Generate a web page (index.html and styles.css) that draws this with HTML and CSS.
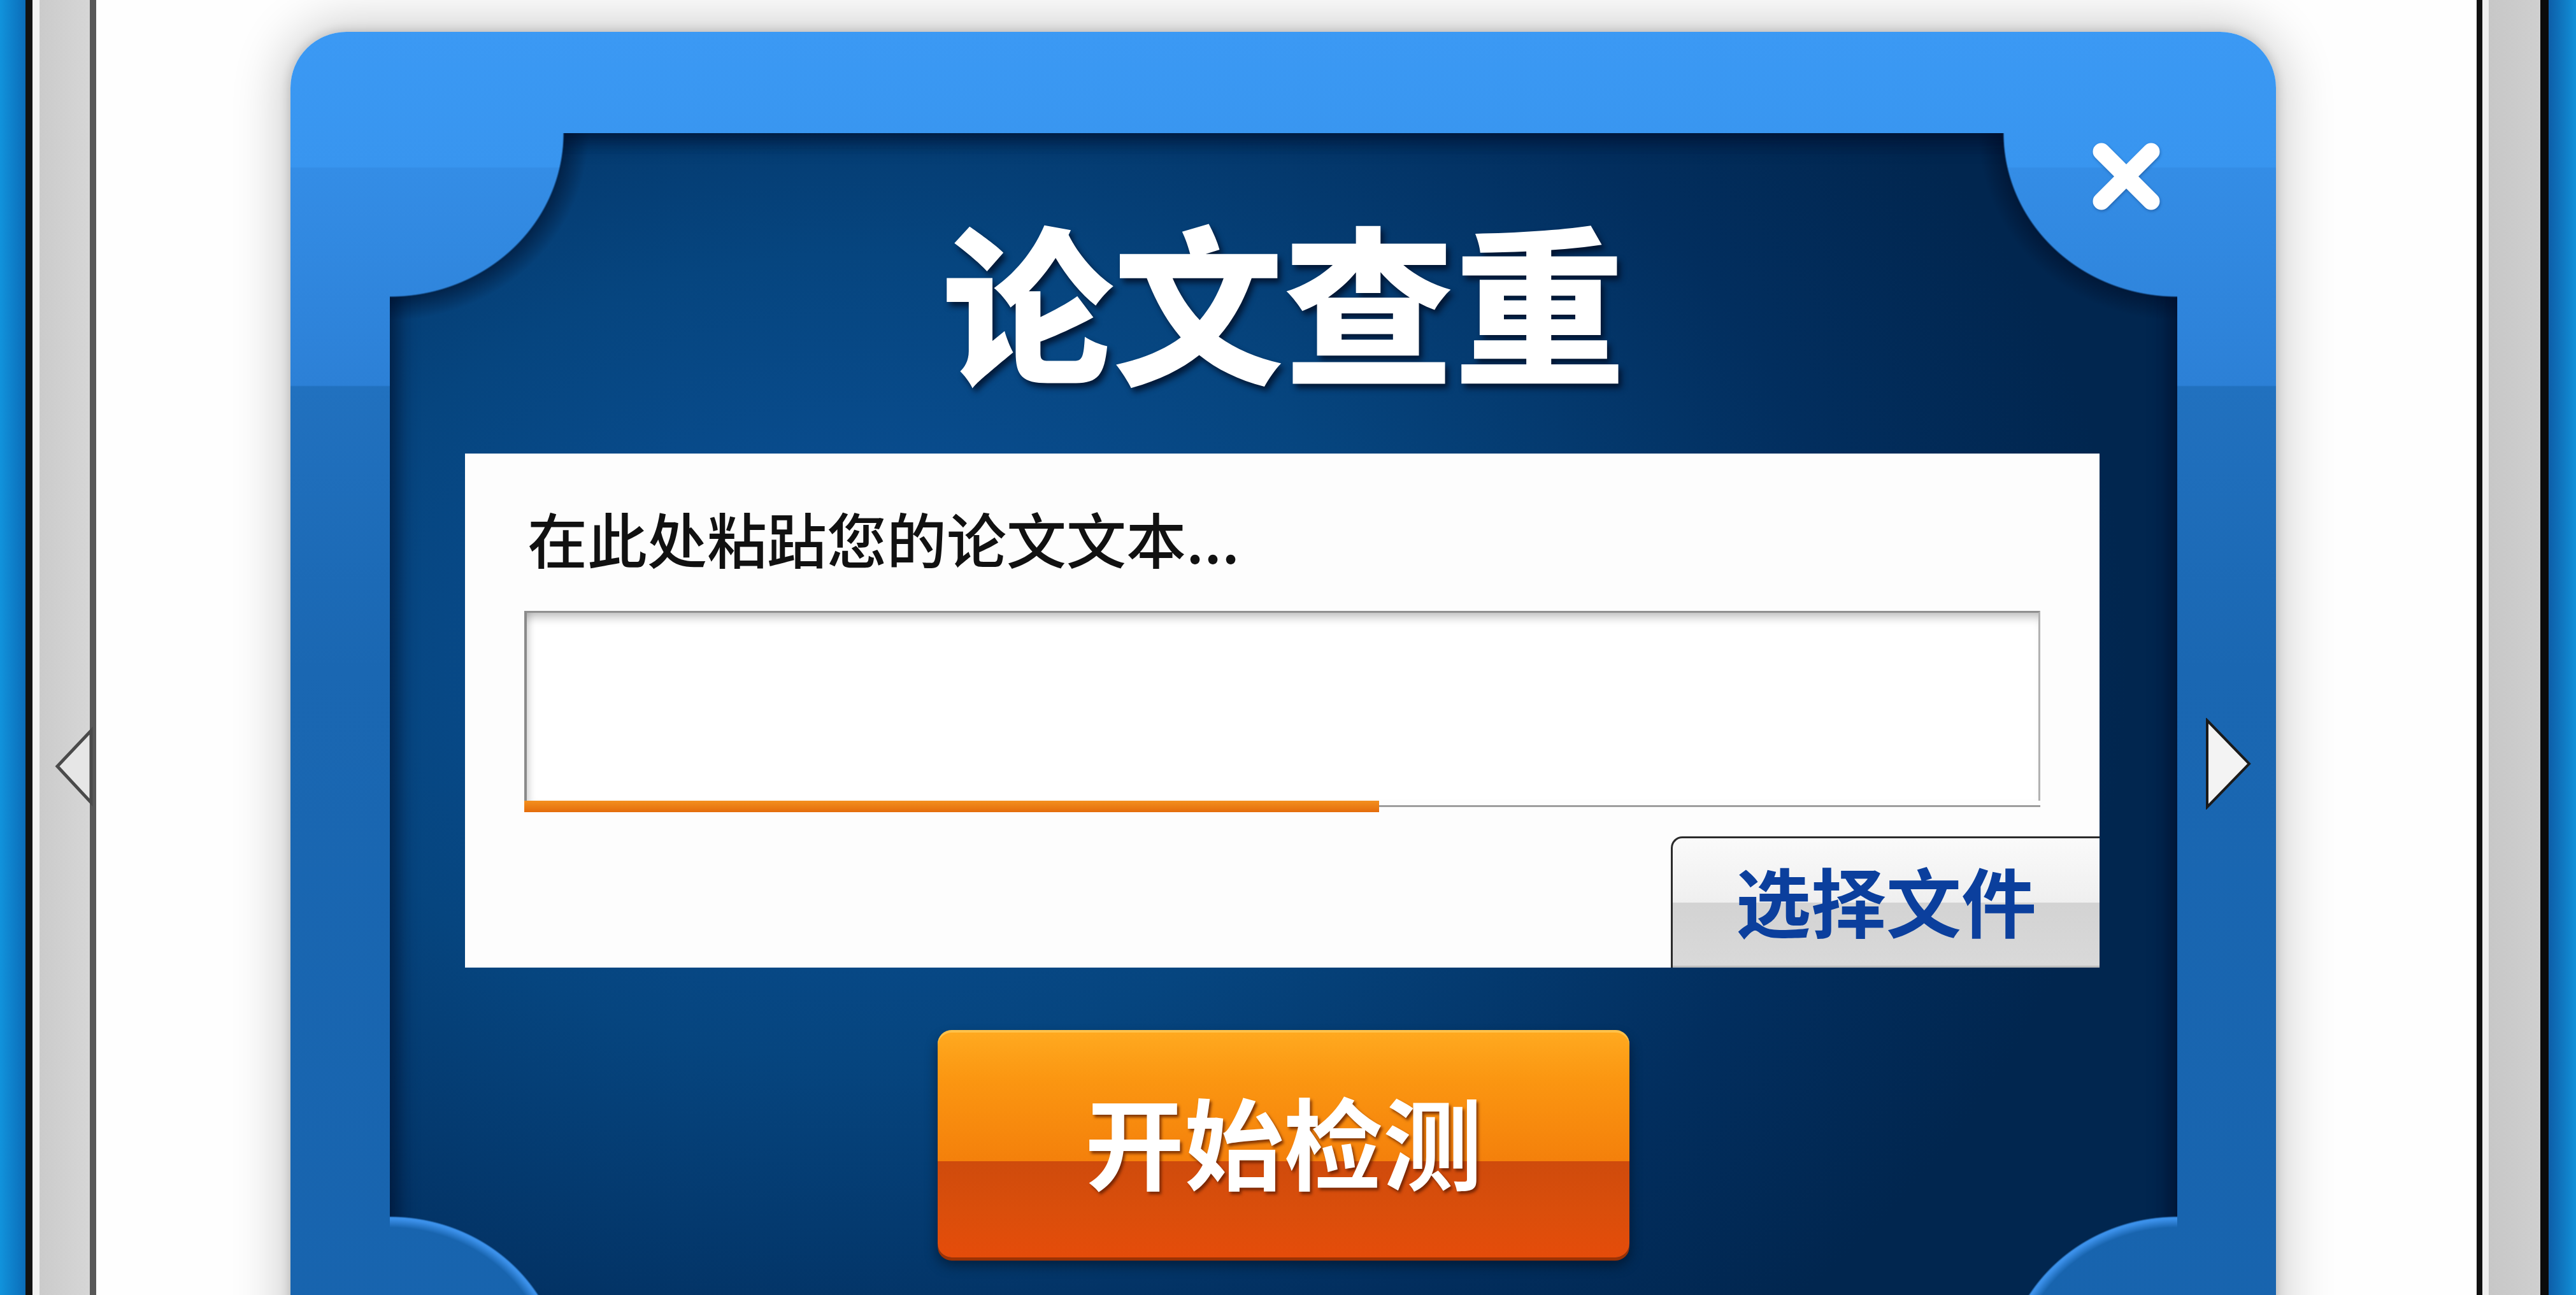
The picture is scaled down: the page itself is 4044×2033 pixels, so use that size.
FILE: index.html
```html
<!DOCTYPE html>
<html lang="zh-CN">

<head>
	<meta charset="UTF-8">
	<title>论文查重</title>
	<link rel="stylesheet" href="styles.css">
</head>

<body>
	<div class="screen">
		<div class="edge edge-left"></div>
		<div class="rail rail-left">
			<svg class="rail-arrow" width="62" height="121" viewBox="0 0 62 121">
				<polygon points="58,4 5,60 58,117" fill="#e6e6e6" stroke="#4a4a4a" stroke-width="5" stroke-linejoin="miter"/>
			</svg>
		</div>

		<main class="stage">
			<section class="dialog">
				<button class="dialog-close" title="关闭">
					<svg width="110" height="108" viewBox="0 0 110 108">
						<path d="M16 15 L94 93 M94 15 L16 93" stroke="#fff" stroke-width="27" stroke-linecap="round"/>
					</svg>
				</button>
				<svg class="dialog-next" width="74" height="144" viewBox="0 0 74 144">
					<polygon points="4,4 70,72 4,140" fill="#f3f3f3" stroke="#1a1a1a" stroke-width="4" stroke-linejoin="miter"/>
				</svg>

				<div class="panel">
					<h1 class="panel-title">论文查重</h1>

					<div class="paper-box">
						<label class="paper-label" for="paperText">在此处粘跕您的论文文本...</label>
						<div class="paper-input">
							<textarea id="paperText"></textarea>
							<div class="upload-track">
								<div class="upload-fill" style="width: 56.4%"></div>
							</div>
						</div>
						<button class="file-button">选择文件</button>
					</div>

					<button class="start-button">开始检测</button>
				</div>
			</section>
		</main>

		<div class="rail rail-right"></div>
		<div class="edge edge-right"></div>
	</div>
</body>

</html>
```

FILE: styles.css
```css
html, body {
	margin: 0;
	padding: 0;
	background: #fefefe;
	overflow: hidden;
}
body {
	font-family: "Noto Sans CJK SC", "Noto Sans", sans-serif;
}
button {
	font-family: inherit;
	cursor: pointer;
}

.screen {
	display: flex;
	flex-direction: row;
	height: 2033px;
	overflow: hidden;
}

/* window frame on both sides */
.edge {
	flex: 0 0 auto;
}
.edge-left {
	width: 40px;
	background: linear-gradient(to right, #1193dc, #0b6cb8);
}
.edge-right {
	width: 43px;
	background: linear-gradient(to right, #0d5ea8, #1290d8);
}
.rail {
	flex: 0 0 auto;
	box-sizing: border-box;
	display: flex;
	flex-direction: column;
}
.rail-left {
	width: 111px;
	border-left: 11px solid #121212;
	border-right: 10px solid #585858;
	background: linear-gradient(to right, #f1f1f1 0, #f1f1f1 11px, #cbcbcb 11px, #d6d6d6 100%);
}
.rail-right {
	width: 113px;
	border-left: 9px solid #111;
	border-right: 13px solid #0b0b0b;
	background: linear-gradient(to right, #efefef 0, #efefef 10px, #c7c7c7 10px, #cfcfcf 100%);
}
.rail-arrow {
	margin: 1143px 0 0 34px;
	overflow: visible;
}

.stage {
	flex: 1;
	min-width: 0;
}

/* dialog */
.dialog {
	position: relative;
	box-sizing: border-box;
	width: 3117px;
	margin: 50px 0 0 305px;
	padding: 159px 155px 157px 156px;
	border-radius: 88px;
	box-shadow: 0 0 80px 14px rgba(0, 0, 0, 0.2), 0 0 16px 2px rgba(0, 0, 0, 0.16);
	background:
		radial-gradient(274px 258px at 0 100%, transparent 93%, #3a8fe8 98%, #3d93ec 100%, transparent 100%) left 156px bottom 157px / 274px 258px no-repeat,
		radial-gradient(274px 258px at 100% 100%, transparent 93%, #3a8fe8 98%, #3d93ec 100%, transparent 100%) right 155px bottom 157px / 274px 258px no-repeat,
		linear-gradient(to bottom, #3b99f4 0, #3895ef 212px, #348de6 214px, #2c80d6 555px, #2171bf 557px, #1a67b2 1000px, #1763ad 100%);
}
.dialog-close {
	position: absolute;
	top: 173px;
	right: 180px;
	padding: 0;
	border: none;
	background: none;
	line-height: 0;
	filter: drop-shadow(1px 2px 2px rgba(0, 30, 80, 0.35));
}
.dialog-next {
	position: absolute;
	top: 1077px;
	right: 38px;
}

.panel {
	box-sizing: border-box;
	height: 1958px;
	padding-top: 124px;
	display: flex;
	flex-direction: column;
	align-items: center;
	background:
		radial-gradient(274px 258px at 0 0, rgba(0, 14, 40, 0.55) 100%, transparent 114%),
		radial-gradient(274px 258px at 100% 0, rgba(0, 14, 40, 0.55) 100%, transparent 114%),
		radial-gradient(ellipse 2000px 1500px at 26% 42%, #0b529a 0%, #06457f 42%, #022e5e 78%, #01264f 100%);
	background-repeat: no-repeat;
	box-shadow:
		inset 16px 0 30px rgba(0, 14, 40, 0.45),
		inset -16px 0 30px rgba(0, 14, 40, 0.45),
		inset 0 16px 30px rgba(0, 14, 40, 0.4);
	-webkit-mask:
		radial-gradient(274px 258px at 0 0, transparent 99%, #000 100%) top left / 50% 50% no-repeat,
		radial-gradient(274px 258px at 100% 0, transparent 99%, #000 100%) top right / 50% 50% no-repeat,
		radial-gradient(274px 258px at 0 100%, transparent 99%, #000 100%) bottom left / 50% 50% no-repeat,
		radial-gradient(274px 258px at 100% 100%, transparent 99%, #000 100%) bottom right / 50% 50% no-repeat;
	mask:
		radial-gradient(274px 258px at 0 0, transparent 99%, #000 100%) top left / 50% 50% no-repeat,
		radial-gradient(274px 258px at 100% 0, transparent 99%, #000 100%) top right / 50% 50% no-repeat,
		radial-gradient(274px 258px at 0 100%, transparent 99%, #000 100%) bottom left / 50% 50% no-repeat,
		radial-gradient(274px 258px at 100% 100%, transparent 99%, #000 100%) bottom right / 50% 50% no-repeat;
}
.panel-title {
	margin: 0;
	font-size: 268px;
	line-height: 268px;
	font-weight: 900;
	color: #fff;
	text-shadow: 5px 7px 10px rgba(0, 10, 30, 0.75);
}

/* paste box */
.paper-box {
	align-self: stretch;
	margin: 111px 122px 0 118px;
	padding-top: 85px;
	display: flex;
	flex-direction: column;
	background: #fdfdfd;
}
.paper-label {
	margin-left: 98px;
	font-size: 94px;
	line-height: 94px;
	font-weight: 500;
	color: #111;
}
.paper-input {
	display: flex;
	flex-direction: column;
	height: 316px;
	margin: 68px 93px 0 93px;
}
.paper-input textarea {
	flex: 1;
	margin: 0;
	padding: 20px;
	resize: none;
	outline: none;
	border: none;
	border-top: 3px solid #8f8f8f;
	border-left: 4px solid #8a8a8a;
	border-right: 3px solid #b2b2b2;
	background: #fff;
	box-shadow: inset 0 16px 16px -10px rgba(0, 0, 0, 0.28), inset 12px 0 12px -8px rgba(0, 0, 0, 0.16);
	font-family: inherit;
	font-size: 60px;
}
.upload-track {
	height: 18px;
	background: linear-gradient(to bottom, transparent 7px, #9d9d9d 7px, #9d9d9d 10px, transparent 10px);
}
.upload-fill {
	height: 100%;
	background: linear-gradient(to bottom, #f3901e, #e46c0b);
}
.file-button {
	align-self: flex-end;
	width: 673px;
	height: 206px;
	margin-top: 38px;
	padding: 0 0 12px;
	border: none;
	border-top: 3px solid #2b2b2b;
	border-left: 3px solid #2b2b2b;
	border-radius: 18px 0 0 0;
	background: linear-gradient(to bottom, #fafafa 0, #efefef 50%, #d3d3d3 50%, #d9d9d9 100%);
	box-shadow: inset 0 -3px 0 #bdbdbd;
	font-size: 118px;
	line-height: 1;
	font-weight: 700;
	color: #0b3f9d;
}

/* start */
.start-button {
	width: 1086px;
	height: 357px;
	margin-top: 98px;
	padding: 0 0 16px;
	border: none;
	border-radius: 22px;
	background: linear-gradient(to bottom, #ffaa20 0%, #fb9611 22%, #f4800b 57.7%, #cf4b0c 57.7%, #da4e0b 80%, #e54c0a 100%);
	box-shadow:
		inset 0 4px 0 rgba(255, 214, 110, 0.55),
		0 5px 0 #9c3204,
		0 12px 20px rgba(0, 0, 0, 0.45);
	font-size: 156px;
	line-height: 1;
	font-weight: 700;
	color: #fff;
	text-shadow: 3px 4px 4px rgba(90, 25, 0, 0.75);
}
```
